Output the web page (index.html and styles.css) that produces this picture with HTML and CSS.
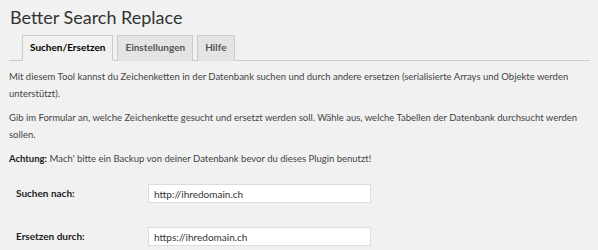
FILE: index.html
```html
<!DOCTYPE html>
<html lang="de">

<head>
    <meta charset="UTF-8">
    <title>Better Search Replace</title>
    <link rel="stylesheet" href="styles.css">
</head>

<body>
    <div class="wrap">
        <h1 class="title">Better Search Replace</h1>

        <nav class="tabs">
            <a href="#" class="tab active">Suchen/Ersetzen</a>
            <a href="#" class="tab">Einstellungen</a>
            <a href="#" class="tab">Hilfe</a>
        </nav>

        <p>Mit diesem Tool kannst du Zeichenketten in der Datenbank suchen und durch andere ersetzen (serialisierte Arrays und Objekte werden unterstützt).</p>
        <p>Gib im Formular an, welche Zeichenkette gesucht und ersetzt werden soll. Wähle aus, welche Tabellen der Datenbank durchsucht werden sollen.</p>
        <p><strong>Achtung:</strong> Mach' bitte ein Backup von deiner Datenbank bevor du dieses Plugin benutzt!</p>

        <div class="form">
            <div class="row">
                <label class="label">Suchen nach:</label>
                <input class="field" type="text" value="http://ihredomain.ch">
            </div>
            <div class="row">
                <label class="label">Ersetzen durch:</label>
                <input class="field" type="text" value="https://ihredomain.ch">
            </div>
        </div>
    </div>
</body>

</html>
```

FILE: styles.css
```css
body {
    margin: 0;
    background: #f1f1f1;
    color: #444;
    font-family: 'Lato', sans-serif;
    font-size: 9.5px;
    line-height: 17px;
    overflow: hidden;
}

.wrap {
    padding: 0 8px 0 9px;
}

.title {
    margin: 0;
    padding: 5px 0 0 1px;
    font-size: 18px;
    font-weight: 400;
    line-height: 24px;
    color: #333;
}

.tabs {
    display: flex;
    gap: 4px;
    margin: 6px 0 0;
    padding-left: 13px;
    border-bottom: 1px solid #ccc;
}

.tab {
    display: block;
    padding: 3px 7px 4px;
    margin-bottom: -1px;
    border: 1px solid #ccc;
    border-bottom: none;
    background: #e4e4e4;
    color: #555;
    font-weight: 700;
    font-size: 10px;
    line-height: 17px;
    text-decoration: none;
}

.tab.active {
    background: #f1f1f1;
    color: #000;
    border-bottom: 1px solid #f1f1f1;
}

p {
    margin: 7px 0;
}

strong {
    font-weight: 700;
    color: #222;
}

.form {
    margin-top: -2px;
}

.row {
    display: flex;
    align-items: center;
    height: 43px;
}

.label {
    width: 132px;
    padding-left: 7px;
    font-size: 10px;
    font-weight: 700;
    color: #222;
}

.field {
    width: 223px;
    height: 19px;
    box-sizing: border-box;
    border: 1px solid #ddd;
    background: #fff;
    padding: 0 5px;
    font-family: 'Lato', sans-serif;
    font-size: 10px;
    color: #333;
}
```
